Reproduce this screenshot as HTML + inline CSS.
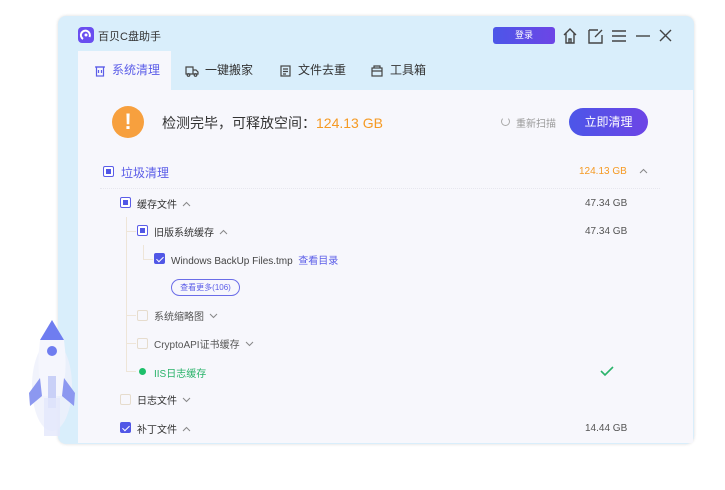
<!DOCTYPE html>
<html><head><meta charset="utf-8"><style>
*{margin:0;padding:0;box-sizing:border-box}
body{width:725px;height:490px;background:#fff;position:relative;overflow:hidden;font-family:"Liberation Sans","Noto Sans CJK SC",sans-serif;}
.win{position:absolute;left:58px;top:16px;width:636px;height:428px;background:#d9eefb;border-radius:8px;box-shadow:0 0 3px rgba(0,0,0,.15)}
.panel{position:absolute;left:78px;top:90px;width:615px;height:353px;background:#f7f7fc}
.t{position:absolute;white-space:nowrap}
.tab{position:absolute;top:51px;height:39px;font-size:12px;color:#333;line-height:39px}
.cb{position:absolute;width:11px;height:11px;border:1.5px solid #5b5de8;border-radius:2px;background:#fff}
.cb.p::after{content:"";position:absolute;left:1.5px;top:1.5px;width:5px;height:5px;background:#5157e6}
.cb.c{background:#5157e6;border-color:#5157e6}
.cb.c::after{content:"";position:absolute;left:3px;top:0.5px;width:3px;height:6px;border:solid #fff;border-width:0 1.5px 1.5px 0;transform:rotate(45deg)}
.cb.e{border:1px solid #e6dccd;background:transparent}
.s{font-size:10px;color:#333}
.sz{font-size:10px;color:#555}
.ln{position:absolute;background:#eee5d8}
.up,.dn{display:inline-block;width:9px;height:6px;margin-left:5px;vertical-align:1px}
</style></head><body>
<svg width="0" height="0" style="position:absolute"><defs>
<symbol id="u" viewBox="0 0 9 6"><path d="M1 5 L4.5 1.5 L8 5" stroke="#888" stroke-width="1" fill="none"/></symbol>
<symbol id="d" viewBox="0 0 9 6"><path d="M1 1 L4.5 4.5 L8 1" stroke="#888" stroke-width="1" fill="none"/></symbol>
</defs></svg>
<div class="win"></div>
<div class="panel"></div>
<div style="position:absolute;left:78px;top:51px;width:93px;height:39px;background:#f7f7fc"></div>
<div style="position:absolute;left:78px;top:27px;width:16px;height:16px;border-radius:4px;background:#6a4ef0"></div>
<svg style="position:absolute;left:78px;top:27px" width="16" height="16"><path d="M5 12 A4.5 4.5 0 1 1 11.5 10" stroke="#fff" stroke-width="2" fill="none"/><circle cx="8" cy="8" r="1.5" fill="#fff"/></svg>
<div class="t" style="left:98px;top:28px;font-size:11px;color:#333">百贝C盘助手</div>
<div style="position:absolute;left:493px;top:27px;width:62px;height:17px;border-radius:3px;background:linear-gradient(90deg,#4c56e8,#6d45e6);color:#fff;font-size:9px;text-align:center;line-height:17px">登录</div>
<svg style="position:absolute;left:562px;top:27px" width="110" height="18" fill="none" stroke="#444" stroke-width="1.4">
<path d="M2 8 L8 2 L14 8 M4 6 V16 H12 V6 M7 16 V12 H9 V16"/>
<path d="M27 3 H36 M27 3 V16 H40 V8 M33 10 L40 3"/>
<path d="M50 4 H64 M50 9 H64 M50 14 H64"/>
<path d="M74 9 H88"/>
<path d="M98 3 L109 14 M109 3 L98 14"/>
</svg>
<!-- tabs -->
<svg style="position:absolute;left:95px;top:65px" width="10" height="12" fill="none" stroke="#5b5de8" stroke-width="1.2"><rect x="1.5" y="2" width="7" height="9"/><path d="M0 2 H10 M3.5 5 V8 M6.5 5 V8"/></svg>
<div class="tab" style="left:112px;color:#5b5de8">系统清理</div>
<svg style="position:absolute;left:185px;top:65px" width="14" height="12" fill="none" stroke="#444" stroke-width="1.2"><path d="M1 2 H8 V9 H1 Z M8 5 H11 L13 7 V9 H8"/><circle cx="3.5" cy="10" r="1.3"/><circle cx="10.5" cy="10" r="1.3"/></svg>
<div class="tab" style="left:205px">一键搬家</div>
<svg style="position:absolute;left:280px;top:65px" width="11" height="12" fill="none" stroke="#444" stroke-width="1.2"><rect x="1" y="1" width="9" height="10"/><path d="M3 4 H8 M3 6.5 H8 M3 9 H6"/></svg>
<div class="tab" style="left:298px">文件去重</div>
<svg style="position:absolute;left:371px;top:65px" width="12" height="12" fill="none" stroke="#444" stroke-width="1.2"><rect x="1" y="3" width="10" height="8"/><path d="M3 3 V1 H9 V3 M1 6 H11"/></svg>
<div class="tab" style="left:390px">工具箱</div>
<!-- header -->
<div style="position:absolute;left:112px;top:106px;width:32px;height:32px;border-radius:50%;background:#f7a03e;color:#fff;font-size:22px;font-weight:bold;text-align:center;line-height:32px">!</div>
<div class="t" style="left:162px;top:113px;font-size:14px;color:#333">检测完毕，可释放空间：<span style="color:#f59a23">124.13 GB</span></div>
<div style="position:absolute;left:501px;top:117px;width:9px;height:9px;border:1.2px solid #aaa;border-radius:50%;border-top-color:transparent"></div>
<div class="t" style="left:516px;top:115px;font-size:10px;color:#999">重新扫描</div>
<div style="position:absolute;left:569px;top:108px;width:79px;height:28px;border-radius:14px;background:linear-gradient(90deg,#4c56e8,#6d45e6);color:#fff;font-size:12px;text-align:center;line-height:28px">立即清理</div>
<!-- tree -->
<div class="cb p" style="left:103px;top:166px"></div>
<div class="t" style="left:121px;top:164px;font-size:12px;color:#5b5de8">垃圾清理</div>
<div class="t" style="left:579px;top:166px;font-size:10px;color:#f59a23">124.13 GB</div>
<svg style="position:absolute;left:639px;top:168px" width="9" height="6"><use href="#u"/></svg>
<div style="position:absolute;left:100px;top:188px;width:560px;border-top:1px dotted #e6e6ee"></div>

<div class="cb p" style="left:120px;top:197px"></div>
<div class="t s" style="left:137px;top:196px">缓存文件<svg class="up"><use href="#u"/></svg></div>
<div class="t sz" style="left:585px;top:198px">47.34 GB</div>

<div class="ln" style="left:126px;top:217px;width:1px;height:155px"></div>
<div class="ln" style="left:126px;top:231px;width:10px;height:1px"></div>
<div class="cb p" style="left:137px;top:225px"></div>
<div class="t s" style="left:154px;top:224px">旧版系统缓存<svg class="up"><use href="#u"/></svg></div>
<div class="t sz" style="left:585px;top:226px">47.34 GB</div>

<div class="ln" style="left:143px;top:245px;width:1px;height:14px"></div>
<div class="ln" style="left:143px;top:259px;width:10px;height:1px"></div>
<div class="cb c" style="left:154px;top:253px"></div>
<div class="t s" style="left:171px;top:252px;color:#444">Windows BackUp Files.tmp <span style="color:#5b5de8">&nbsp;查看目录</span></div>
<div class="t" style="left:171px;top:279px;width:69px;height:17px;border:1px solid #6b6de8;border-radius:9px;font-size:8px;color:#5b5de8;text-align:center;line-height:15px">查看更多(106)</div>

<div class="ln" style="left:126px;top:315px;width:10px;height:1px"></div>
<div class="cb e" style="left:137px;top:310px"></div>
<div class="t s" style="left:154px;top:308px;color:#555">系统缩略图<svg class="dn"><use href="#d"/></svg></div>
<div class="ln" style="left:126px;top:343px;width:10px;height:1px"></div>
<div class="cb e" style="left:137px;top:338px"></div>
<div class="t s" style="left:154px;top:336px;color:#555">CryptoAPI证书缓存<svg class="dn"><use href="#d"/></svg></div>
<div class="ln" style="left:126px;top:371px;width:10px;height:1px"></div>
<div style="position:absolute;left:139px;top:368px;width:7px;height:7px;border-radius:50%;background:#1dbf6a"></div>
<div class="t" style="left:154px;top:365px;font-size:10px;color:#2ab36a">IIS日志缓存</div>
<svg style="position:absolute;left:600px;top:365px" width="14" height="12"><path d="M1 6 L5 10 L13 2" stroke="#2ab36a" stroke-width="1.6" fill="none"/></svg>

<div class="cb e" style="left:120px;top:394px"></div>
<div class="t s" style="left:137px;top:392px">日志文件<svg class="dn"><use href="#d"/></svg></div>
<div class="cb c" style="left:120px;top:422px"></div>
<div class="t s" style="left:137px;top:421px">补丁文件<svg class="up"><use href="#u"/></svg></div>
<div class="t sz" style="left:585px;top:423px">14.44 GB</div>
<!-- rocket -->
<svg style="position:absolute;left:26px;top:318px" width="52" height="125">
<ellipse cx="26" cy="68" rx="20" ry="45" fill="#eef0fb" opacity=".8"/>
<path d="M26 2 L38 22 L14 22 Z" fill="#6f7df0"/>
<path d="M14 22 Q10 50 16 78 H36 Q42 50 38 22 Z" fill="#f5f6fd"/>
<circle cx="26" cy="33" r="5" fill="#6f7df0"/>
<path d="M14 60 L3 75 L4 88 L16 78 Z M38 60 L49 75 L48 88 L36 78 Z" fill="#8c98f0"/>
<path d="M22 58 H30 V90 H22 Z" fill="#c9d0f7"/>
<rect x="18" y="80" width="16" height="38" fill="#e3e7fb" opacity=".8"/>
</svg>
</body></html>
